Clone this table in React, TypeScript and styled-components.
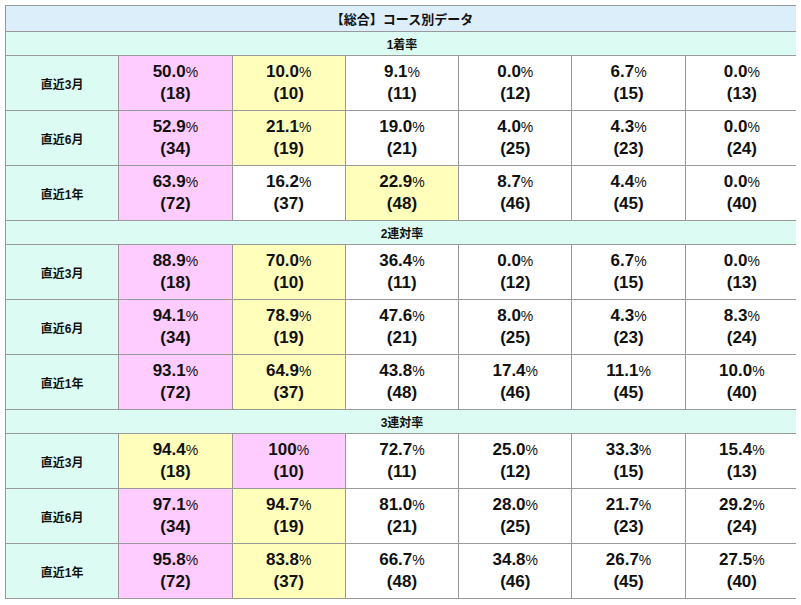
import styled, { createGlobalStyle } from 'styled-components'

const GlobalStyle = createGlobalStyle`
  body {
    margin: 5px;
    background: #fff;
    font-family: 'Liberation Sans', 'Noto Sans CJK JP', sans-serif;
    color: #111;
  }
`

type Tone = 'pink' | 'yellow' | 'none'

const toneColor: Record<Tone, string> = {
  pink: '#ffccff',
  yellow: '#ffffbb',
  none: '#ffffff',
}

const Table = styled.table`
  width: 794px;
  border-collapse: collapse;
  table-layout: fixed;
  border: 1px solid #999;
`

const TitleCell = styled.th`
  height: 25px;
  padding: 0;
  background: #ddeefb;
  border: 1px solid #999;
  font-size: 13px;
  font-weight: bold;
  text-align: center;
`

const SectionCell = styled.th`
  height: 23px;
  padding: 0;
  background: #dcfcf3;
  border: 1px solid #999;
  font-size: 12px;
  font-weight: bold;
  text-align: center;
`

const LabelCell = styled.th`
  height: 54px;
  padding: 0;
  background: #dcfcf3;
  border: 1px solid #999;
  font-size: 12px;
  font-weight: bold;
  text-align: center;
`

const ValueCell = styled.td<{ $tone: Tone }>`
  padding: 0;
  background: ${(p) => toneColor[p.$tone]};
  border: 1px solid #999;
  text-align: center;
  font-size: 17px;
  font-weight: bold;
  line-height: 22px;
`

const Percent = styled.span`
  font-size: 14px;
  font-weight: normal;
`

type Cell = [string, number, Tone?]
type Row = { label: string; cells: Cell[] }
type Section = { name: string; rows: Row[] }

const sections: Section[] = [
  {
    name: '1着率',
    rows: [
      { label: '直近3月', cells: [['50.0', 18, 'pink'], ['10.0', 10, 'yellow'], ['9.1', 11], ['0.0', 12], ['6.7', 15], ['0.0', 13]] },
      { label: '直近6月', cells: [['52.9', 34, 'pink'], ['21.1', 19, 'yellow'], ['19.0', 21], ['4.0', 25], ['4.3', 23], ['0.0', 24]] },
      { label: '直近1年', cells: [['63.9', 72, 'pink'], ['16.2', 37], ['22.9', 48, 'yellow'], ['8.7', 46], ['4.4', 45], ['0.0', 40]] },
    ],
  },
  {
    name: '2連対率',
    rows: [
      { label: '直近3月', cells: [['88.9', 18, 'pink'], ['70.0', 10, 'yellow'], ['36.4', 11], ['0.0', 12], ['6.7', 15], ['0.0', 13]] },
      { label: '直近6月', cells: [['94.1', 34, 'pink'], ['78.9', 19, 'yellow'], ['47.6', 21], ['8.0', 25], ['4.3', 23], ['8.3', 24]] },
      { label: '直近1年', cells: [['93.1', 72, 'pink'], ['64.9', 37, 'yellow'], ['43.8', 48], ['17.4', 46], ['11.1', 45], ['10.0', 40]] },
    ],
  },
  {
    name: '3連対率',
    rows: [
      { label: '直近3月', cells: [['94.4', 18, 'yellow'], ['100', 10, 'pink'], ['72.7', 11], ['25.0', 12], ['33.3', 15], ['15.4', 13]] },
      { label: '直近6月', cells: [['97.1', 34, 'pink'], ['94.7', 19, 'yellow'], ['81.0', 21], ['28.0', 25], ['21.7', 23], ['29.2', 24]] },
      { label: '直近1年', cells: [['95.8', 72, 'pink'], ['83.8', 37, 'yellow'], ['66.7', 48], ['34.8', 46], ['26.7', 45], ['27.5', 40]] },
    ],
  },
]

function App() {
  return (
    <>
      <GlobalStyle />
      <Table>
        <tbody>
          <tr>
            <TitleCell colSpan={7}>【総合】コース別データ</TitleCell>
          </tr>
          {sections.map((section) => (
            <SectionRows key={section.name} section={section} />
          ))}
        </tbody>
      </Table>
    </>
  )
}

function SectionRows({ section }: { section: Section }) {
  return (
    <>
      <tr>
        <SectionCell colSpan={7}>{section.name}</SectionCell>
      </tr>
      {section.rows.map((row) => (
        <tr key={row.label}>
          <LabelCell>{row.label}</LabelCell>
          {row.cells.map(([rate, count, tone], i) => (
            <ValueCell key={i} $tone={tone ?? 'none'}>
              {rate}
              <Percent>%</Percent>
              <br />({count})
            </ValueCell>
          ))}
        </tr>
      ))}
    </>
  )
}

export default App
